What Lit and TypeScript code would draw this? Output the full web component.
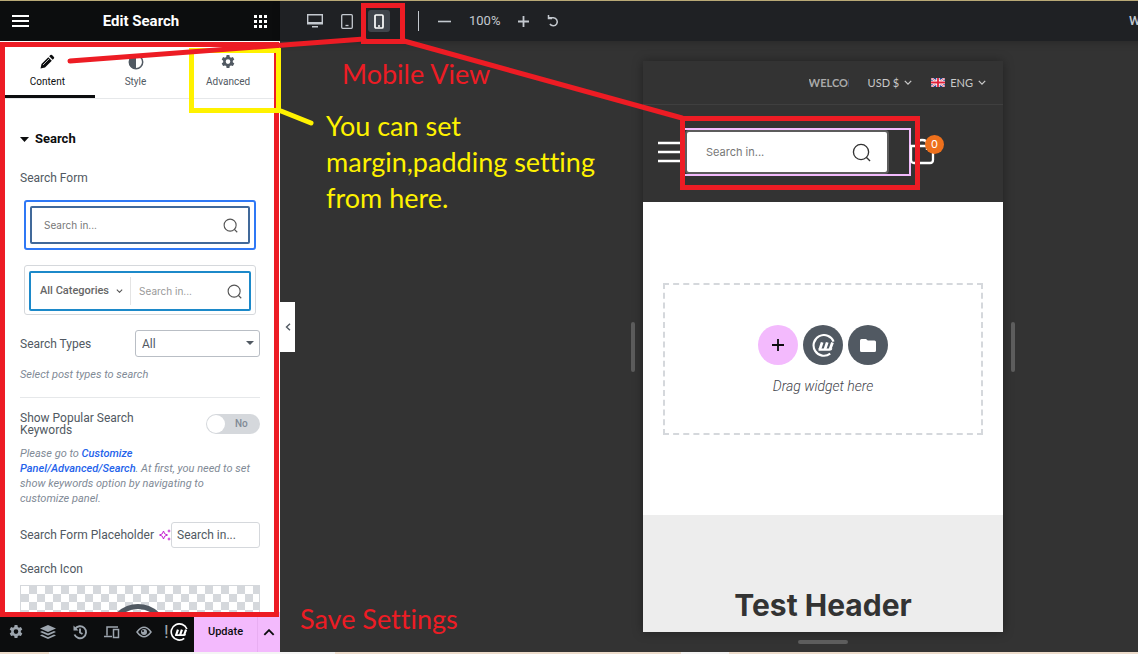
import { LitElement, html, svg, css } from "lit";
import { customElement } from "lit/decorators.js";

const gear = html`<svg viewBox="0 0 16 16" width="16" height="16" aria-hidden="true">
  <path fill="currentColor" fill-rule="evenodd" d="M6.600 1h2.800l.4 2 1.200.7 1.900-.7 1.400 2.400-1.500 1.400v1.500l1.500 1.300-1.400 2.500-1.900-.7-1.200.7-.4 2H6.600l-.4-2-1.200-.7-1.900.7-1.400-2.500 1.500-1.300V6.800l-1.500-1.400L3.100 3l1.900.7 1.200-.7zM8 5.300a2.300 2.300 0 1 0 0 4.600 2.300 2.300 0 0 0 0-4.600z"/></svg>`;

const chevron = (w: number) => html`<svg viewBox="0 0 10 6" width=${w} height=${Math.round(w * 0.6)} aria-hidden="true">
  <path d="M1 1l4 4 4-4" fill="none" stroke="currentColor" stroke-width="1.600"/></svg>`;

const lens = (size: number, sw: number) => html`<svg viewBox="0 0 20 20" width=${size} height=${size} aria-hidden="true">
  <g fill="none" stroke="currentColor" stroke-width=${sw}><circle cx="9.500" cy="9.500" r="8"/><path d="M15 15l4 4"/></g></svg>`;

const logo = (size: number) => html`<svg viewBox="0 0 24 24" width=${size} height=${size} aria-hidden="true">
  <g fill="none" stroke="currentColor">
    <path d="M22.500 8A10.800 10.800 0 1 0 19 20.500" stroke-width="2.200"/>
    <path d="M10.600 8.800L8.200 16M15.900 8.800L13.500 16M21.400 8.800L18.800 16" stroke-width="2.900"/>
    <path d="M6.800 16.200h11.500q1.400 0 2-1.400" stroke-width="2.400"/>
  </g></svg>`;

@customElement("editor-panel")
class EditorPanel extends LitElement {
  static styles = css`
    :host { display: flex; flex-direction: column; min-height: 0; background: #fff; color: #515962; font: 12px/16px Roboto, sans-serif; }
    * { box-sizing: border-box; }
    button { border: 0; padding: 0; background: none; color: inherit; font: inherit; }
    svg { display: block; flex: none; }
    header { display: flex; align-items: center; justify-content: space-between; flex: none; height: 40px; padding: 0 12px; background: #0c0d0e; color: #fff; }
    h1 { margin: 0; font-size: 15px; font-weight: 700; }
    .tabs { display: flex; flex: none; height: 58px; border-bottom: 1px solid #e6e8ea; }
    .tab { flex: 1 1 auto; display: flex; flex-direction: column; align-items: center; gap: 4px; padding-top: 13px; font-size: 10px; line-height: 16px; }
    .tab.active { color: #0c0d0e; border-bottom: 3px solid #0c0d0e; height: 57px; }
    .controls { flex: 1; min-height: 0; overflow: hidden; padding: 30px 20px 0; }
    .heading { display: flex; align-items: center; gap: 6px; margin: 0; color: #0c0d0e; font-size: 13px; font-weight: 700; line-height: 20px; }
    .label { display: block; }
    .first { margin-top: 21px; }
    .choice { display: block; width: calc(100% - 8px); margin: 14px 4px 0; padding: 4px; border: 2px solid #2f78f5; border-radius: 3px; }
    .choice.plain { margin-top: 15px; padding: 5px 4px 3px; border: 1px solid #d5d8dc; }
    .preview { display: flex; align-items: center; height: 38px; padding: 0 10px 0 12px; border: 2px solid #41699a; border-radius: 2px; color: #777; font-family: Inter, sans-serif; font-size: 10px; }
    .preview svg { margin-left: auto; color: #555; }
    .plain .preview { height: 40px; padding: 0 7px 0 9px; border-color: #1c89c9; color: #999; }
    .category { display: flex; align-items: center; gap: 7px; height: 28px; margin-right: 8px; padding-right: 7px; border-right: 1px solid #e4e4e4; color: #666; font-family: Roboto, sans-serif; font-size: 11px; font-weight: 500; }
    .row { display: flex; align-items: center; justify-content: space-between; }
    .types { margin-top: 15px; }
    .selectbox { position: relative; width: 125px; color: #515962; }
    select { appearance: none; display: block; width: 100%; height: 27px; padding: 0 6px; border: 1px solid #b9bec5; border-radius: 3px; background: #fff; color: #515962; font: 12px/16px Roboto, sans-serif; }
    .selectbox svg { position: absolute; right: 6px; top: 11px; pointer-events: none; }
    .hint { margin: 10px 0 0; color: #818a96; font-size: 11px; line-height: 15px; font-style: italic; }
    .hint a { color: #2563eb; font-weight: 500; text-decoration: none; }
    .rule { margin: 15px 0 14px; border: 0; border-top: 1px solid #e6e8ea; }
    .narrow { width: 130px; line-height: 12px; }
    .switch { position: relative; display: flex; align-items: center; width: 54px; height: 20px; border-radius: 10px; background: #d5d8dc; color: #818a96; font-size: 10px; font-weight: 500; }
    .switch input { appearance: none; width: 18px; height: 18px; margin: 0 10px 0 1px; border-radius: 9px; background: #fff; }
    .placeholder { margin-top: 16px; }
    .placeholder svg { margin-left: 4px; }
    .text { width: 89px; height: 26px; padding: 0 5px; border: 1px solid #d5d8dc; border-radius: 3px; color: #515962; font: 12px/16px Roboto, sans-serif; }
    .icon-label { margin-top: 13px; }
    .media { display: flex; justify-content: center; margin-top: 8px; padding-top: 18px; height: 120px; border: 1px solid #d5d8dc; background: repeating-conic-gradient(#d5d8dc 0 25%, #fff 0 50%) 0 0 / 16px 16px; }
    .media svg { margin-right: 4px; }
    footer { display: flex; flex: none; height: 40px; background: #0c0d0e; color: #9da5ae; }
    .tools { display: flex; flex: 1; align-items: center; gap: 16px; padding-left: 8px; }
    .brand { display: flex; align-items: center; gap: 1px; margin-left: -4px; color: #fff; }
    .bang { color: #9da5ae; font-size: 18px; }
    .update { width: 63px; background: #f3bafd; color: #0c0d0e; font-size: 11px; font-weight: 500; }
    .more { display: flex; align-items: center; justify-content: center; width: 23px; border-left: 1px solid #e8aef2; background: #f3bafd; color: #0c0d0e; }
    .more svg { transform: rotate(180deg); }
  `;

  render() {
    return html`
      <header>
        <button aria-label="Menu"><svg viewBox="0 0 17 12" width="17" height="12"><path d="M0 1h17M0 6h17M0 11h17" stroke="currentColor" stroke-width="2"/></svg></button>
        <h1>Edit Search</h1>
        <button aria-label="Widgets"><svg viewBox="0 0 15 13" width="15" height="13"><path d="M1 0h3v3H1zM6 0h3v3H6zM11 0h3v3h-3zM1 5h3v3H1zM6 5h3v3H6zM11 5h3v3h-3zM1 10h3v3H1zM6 10h3v3H6zM11 10h3v3h-3z" fill="currentColor"/></svg></button>
      </header>
      <nav class="tabs">
        <button class="tab active"><svg viewBox="0 0 16 16" width="16" height="16"><path d="M1.500 14.500l1-4.500 6.800-6.800 3.500 3.500L6 13.500zM10.200 2.300l1.200-1.200q.8-.7 1.600 0l1.900 1.900q.7.8 0 1.600l-1.200 1.200z" fill="currentColor"/><path d="M4 11l6-6" stroke="#fff" stroke-width=".7"/></svg>Content</button>
        <button class="tab"><svg viewBox="0 0 16 16" width="16" height="16"><circle cx="8" cy="8" r="6.700" fill="none" stroke="currentColor" stroke-width="1.500"/><path d="M8 1a7 7 0 0 0 0 14z" fill="currentColor"/></svg>Style</button>
        <button class="tab">${gear}Advanced</button>
      </nav>
      <main class="controls">
        <h2 class="heading"><svg viewBox="0 0 9 5" width="9" height="5"><path d="M0 0h9L4.500 5z" fill="currentColor"/></svg>Search</h2>
        <span class="label first">Search Form</span>
        <button class="choice"><span class="preview">Search in...${lens(15, 1.5)}</span></button>
        <button class="choice plain"><span class="preview"><span class="category">All Categories ${chevron(7)}</span>Search in...${lens(15, 1.5)}</span></button>
        <div class="row types">
          <label for="types">Search Types</label>
          <div class="selectbox">
            <select id="types"><option>All</option></select>
            <svg viewBox="0 0 8 4" width="8" height="4"><path d="M0 0h8L4 4z" fill="currentColor"/></svg>
          </div>
        </div>
        <p class="hint">Select post types to search</p>
        <hr class="rule" />
        <div class="row">
          <label class="narrow" for="popular">Show Popular Search Keywords</label>
          <span class="switch"><input id="popular" type="checkbox" />No</span>
        </div>
        <p class="hint">Please go to <a href="#customize">Customize<br />Panel/Advanced/Search</a>. At first, you need to set<br />show keywords option by navigating to<br />customize panel.</p>
        <div class="row placeholder">
          <label for="ph">Search Form Placeholder</label>
          <svg viewBox="0 0 12 12" width="12" height="12"><path d="M4.500 2l1.200 2.800L8.500 6 5.700 7.200 4.500 10 3.300 7.200.5 6l2.800-1.200z" fill="none" stroke="#c31fd0"/><path d="M10 0l.6 1.400L12 2l-1.400.6L10 4l-.6-1.400L8 2l1.400-.6zM10 8l.6 1.400 1.400.6-1.400.6L10 12l-.6-1.400L8 10l1.400-.6z" fill="#c31fd0"/></svg>
          <input class="text" id="ph" value="Search in..." />
        </div>
        <span class="label icon-label">Search Icon</span>
        <div class="media"><svg viewBox="0 0 60 60" width="60" height="60"><circle cx="30" cy="30" r="27.500" fill="none" stroke="#515962" stroke-width="5"/><path d="M20 19h5v22h-5zM29 19h12v4H29zM29 28h12v4H29zM29 37h12v4H29z" fill="#515962"/></svg></div>
      </main>
      <footer>
        <div class="tools">
          <button aria-label="Settings">${gear}</button>
          <button aria-label="Structure"><svg viewBox="0 0 16 16" width="16" height="16"><path d="M8 1l8 3.500L8 8 0 4.500zM2 7l6 2.600L14 7l2 1-8 3.500L0 8zM2 10.600l6 2.600 6-2.600 2 1L8 15l-8-3.400z" fill="currentColor"/></svg></button>
          <button aria-label="History"><svg viewBox="0 0 16 16" width="16" height="16"><g fill="none" stroke="currentColor" stroke-width="1.900"><path d="M3 5a6 6 0 1 1-.5 5.500M8 4.500V8.500l2.500 1.500"/></g><path d="M1.500 1.500v5h5z" fill="currentColor"/></svg></button>
          <button aria-label="Responsive"><svg viewBox="0 0 16 14" width="16" height="14"><g fill="none" stroke="currentColor" stroke-width="1.500"><path d="M14 2H3v8.500M0 11.500h8"/><rect x="9.500" y="4.500" width="5" height="8"/></g></svg></button>
          <button aria-label="Preview"><svg viewBox="0 0 16 12" width="16" height="12"><path d="M1 6q7-9.500 14 0Q8 15.500 1 6z" fill="none" stroke="currentColor" stroke-width="1.500"/><circle cx="8" cy="6" r="3" fill="currentColor"/><circle cx="7" cy="5" r="1" fill="#0c0d0e"/></svg></button>
          <button class="brand" aria-label="Library"><span class="bang">!</span>${logo(18)}</button>
        </div>
        <button class="update">Update</button>
        <button class="more" aria-label="Save options">${chevron(12)}</button>
      </footer>`;
  }
}

@customElement("device-canvas")
class DeviceCanvas extends LitElement {
  static styles = css`
    :host { display: flex; flex-direction: column; min-height: 0; background: #333; font: 12px/16px Roboto, sans-serif; }
    * { box-sizing: border-box; }
    button { border: 0; padding: 0; background: none; color: inherit; font: inherit; display: flex; align-items: center; justify-content: center; }
    svg { display: block; flex: none; }
    .bar { display: flex; align-items: center; flex: none; height: 40px; padding-left: 24px; background: #1f2124; color: #c4c9cf; font-size: 13px; box-shadow: 0 2px 8px rgba(0,0,0,.2); }
    .devices { display: flex; gap: 10px; padding-right: 28px; }
    .devices button { width: 22px; height: 22px; border-radius: 3px; }
    .devices .on { background: #3f444b; color: #fff; }
    .zoom { display: flex; align-items: center; gap: 18px; height: 20px; padding-left: 19px; border-left: 1px solid #c4c9cf; }
    .site { width: 237px; margin-left: auto; font-size: 13px; font-weight: 500; }
    .stage { flex: 1; min-height: 0; display: flex; flex-direction: column; align-items: center; gap: 8px; padding: 20px 0 8px; }
    .frame { flex: 1; min-height: 0; display: flex; align-items: center; gap: 8px; }
    .grip { width: 4px; height: 50px; border-radius: 2px; background: #5d5d5d; }
    .grip.flat { width: 50px; height: 4px; flex: none; }
    .phone { display: flex; flex-direction: column; align-self: stretch; width: 360px; overflow: hidden; background: #fff; box-shadow: 0 0 10px rgba(0,0,0,.35); font-family: Inter, sans-serif; }
    .top { display: flex; align-items: center; justify-content: flex-end; gap: 19px; height: 44px; flex: none; padding-right: 17px; border-bottom: 1px solid #3f3f3f; background: #333; color: #c9c9c9; font-family: Lato, sans-serif; font-size: 11px; }
    .ticker { width: 40px; overflow: hidden; color: #aaa; font-weight: 700; white-space: nowrap; }
    .top button { gap: 5px; }
    .head { display: flex; align-items: center; height: 97px; flex: none; padding: 0 8px 3px 15px; background: #333; color: #fff; }
    .widget { flex: none; width: 228px; height: 48px; border: 2px solid #f3bafd; margin-left: -3px; }
    .search { display: flex; align-items: center; width: 204px; height: 44px; padding: 0 16px 0 19px; border: 2px solid #5c5c5c; border-radius: 4px; background: #fff; color: #333; }
    .search input { flex: 1; min-width: 0; padding: 0; border: 0; outline: 0; background: none; font: 11px/16px Inter, sans-serif; }
    .search input::placeholder { color: #777; opacity: 1; }
    .cart { position: relative; margin-left: -2px; }
    .count { position: absolute; left: 16px; top: -3px; width: 19px; height: 19px; border-radius: 10px; background: #ee701c; color: #fff; font-size: 11px; line-height: 19px; text-align: center; }
    .body { flex: none; padding: 81px 20px 80px; }
    .drop { display: flex; flex-direction: column; align-items: center; gap: 13px; height: 152px; padding-top: 40px; border: 2px dashed #d5d8dc; color: #3f444b; font: italic 300 14px/16px Roboto, sans-serif; }
    .actions { display: flex; gap: 5px; }
    .actions button { width: 40px; height: 40px; border-radius: 20px; background: #515962; color: #fff; }
    .actions .add { background: #f3bafd; color: #0c0d0e; }
    .foot { flex: 1; padding-top: 72px; background: #ededed; }
    h2 { margin: 0; color: #333; font-size: 30px; line-height: 36px; font-weight: 700; text-align: center; }
  `;

  render() {
    return html`
      <div class="bar">
        <div class="devices">
          <button aria-label="Desktop"><svg viewBox="0 0 16 14" width="16" height="14"><path d="M.7.700h14.600v9H.7z" fill="none" stroke="currentColor" stroke-width="1.400"/><path d="M0 8h16v2H0zM5 12h6v1.500H5z" fill="currentColor"/></svg></button>
          <button aria-label="Tablet"><svg viewBox="0 0 12 15" width="12" height="15"><rect x=".7" y=".7" width="10.600" height="13.600" rx="1" fill="none" stroke="currentColor" stroke-width="1.300"/><path d="M4.500 11.500h3" stroke="currentColor" stroke-width="1.300"/></svg></button>
          <button class="on" aria-label="Mobile"><svg viewBox="0 0 10 15" width="10" height="15"><rect x="1" y="1" width="8" height="13" rx="1" fill="none" stroke="currentColor" stroke-width="1.700"/><path d="M4 12h2" stroke="currentColor" stroke-width="1.500"/></svg></button>
        </div>
        <div class="zoom">
          <button aria-label="Zoom out"><svg viewBox="0 0 13 13" width="13" height="13"><path d="M0 6.500h13" stroke="currentColor" stroke-width="1.600"/></svg></button>
          <span>100%</span>
          <button aria-label="Zoom in"><svg viewBox="0 0 11 11" width="11" height="11"><path d="M0 5.500h11M5.500 0v11" stroke="currentColor" stroke-width="1.800"/></svg></button>
          <button aria-label="Reset"><svg viewBox="0 0 12 12" width="12" height="12"><path d="M1 2.800h5.500a4 4 0 1 1-3.600 6.200M1.500 0v3.500h3.500" fill="none" stroke="currentColor" stroke-width="1.500"/></svg></button>
        </div>
        <span class="site">W</span>
      </div>
      <div class="stage">
        <div class="frame">
          <div class="grip"></div>
          <div class="phone">
            <div class="top">
              <span class="ticker">WELCOM</span>
              <button>USD $ ${chevron(8)}</button>
              <button><svg viewBox="0 0 14 9" width="14" height="9"><path d="M0 0h14v9H0z" fill="#253f8e"/><path d="M0 0l14 9M14 0L0 9" stroke="#fff" stroke-width="2"/><path d="M0 0l14 9M14 0L0 9" stroke="#e0203a" stroke-width=".7"/><path d="M7 0v9M0 4.500h14" stroke="#fff" stroke-width="3.400"/><path d="M7 0v9M0 4.500h14" stroke="#e0203a" stroke-width="1.800"/></svg> ENG ${chevron(8)}</button>
            </div>
            <div class="head">
              <button aria-label="Open menu"><svg viewBox="0 0 28 22" width="28" height="22"><path d="M0 2h28M0 11h28M0 20h28" stroke="currentColor" stroke-width="2.500"/></svg></button>
              <div class="widget"><label class="search"><input aria-label="Search" placeholder="Search in..." />${lens(19, 1.4)}</label></div>
              <button class="cart" aria-label="Cart"><svg viewBox="0 0 26 28" width="26" height="28"><g fill="none" stroke="currentColor" stroke-width="2.300"><path d="M2 8h22v14q0 3-3 3H5q-3 0-3-3zM8 12V6q0-4 5-4t5 4v6"/></g></svg><span class="count">0</span></button>
            </div>
            <div class="body">
              <div class="drop">
                <div class="actions">
                  <button class="add" aria-label="Add"><svg viewBox="0 0 12 12" width="12" height="12"><path d="M0 6h12M6 0v12" stroke="currentColor" stroke-width="1.800"/></svg></button>
                  <button aria-label="Library">${logo(23)}</button>
                  <button aria-label="Templates"><svg viewBox="0 0 16 13" width="16" height="13"><path d="M0 1.500Q0 0 1.500 0H6l1.800 1.500h6.700Q16 1.500 16 3v8.500q0 1.500-1.500 1.500h-13Q0 13 0 11.500z" fill="currentColor"/></svg></button>
                </div>
                <span>Drag widget here</span>
              </div>
            </div>
            <div class="foot"><h2>Test Header</h2></div>
          </div>
          <div class="grip"></div>
        </div>
        <div class="grip flat"></div>
      </div>`;
  }
}

@customElement("app-root")
class AppRoot extends LitElement {
  static styles = css`
    :host { position: relative; display: grid; grid-template-columns: 280px minmax(1086px, 1fr); grid-template-rows: minmax(0, 1fr); box-sizing: border-box; height: 100vh; overflow: hidden; border-top: 1px solid #b9a976; padding-bottom: 2px; background: linear-gradient(90deg, #eddccb 49px, #f4f4f4 49px 335px, #eddccb 335px 681px, #f4f4f4 681px 729px, #eddccb 729px); }
    .collapse { position: absolute; left: 280px; top: 301px; width: 15px; height: 50px; padding: 0; border: 0; background: #fff; color: #515962; }
    .collapse svg { display: block; margin: auto; }
    .marks { position: absolute; left: 0; top: -1px; pointer-events: none; }
    .note { position: absolute; margin: 0; font: 27px/36px Lato, sans-serif; font-variant-ligatures: none; color: #ed1c24; white-space: nowrap; }
    .view { left: 342px; top: 55px; }
    .save { left: 300px; top: 600px; }
    .spacing { left: 326px; top: 107px; color: #fff200; }
  `;

  render() {
    return html`
      <editor-panel></editor-panel>
      <device-canvas></device-canvas>
      <button class="collapse" aria-label="Collapse panel"><svg viewBox="0 0 6 8" width="6" height="8"><path d="M5 .7L1.500 4 5 7.300" fill="none" stroke="currentColor" stroke-width="1.400"/></svg></button>
      <svg class="marks" width="1138" height="654" viewBox="0 0 1138 654" fill="none" stroke-width="5" stroke-linecap="round" aria-hidden="true">
        ${svg`<rect x="2.500" y="44.500" width="274" height="570" stroke="#ed1c24"/>
        <rect x="191.500" y="50.500" width="87" height="60" stroke="#fff200"/>
        <path d="M281 111l30 12" stroke="#fff200"/>
        <path d="M70 61L364 39M404 41L682 118" stroke="#ed1c24"/>
        <rect x="363.500" y="5.500" width="39" height="36" stroke="#ed1c24"/>
        <rect x="682.500" y="118.500" width="235" height="69" stroke="#ed1c24"/>`}
      </svg>
      <p class="note view">Mobile View</p>
      <p class="note spacing">You can set<br />margin,padding setting<br />from here.</p>
      <p class="note save">Save Settings</p>`;
  }
}
